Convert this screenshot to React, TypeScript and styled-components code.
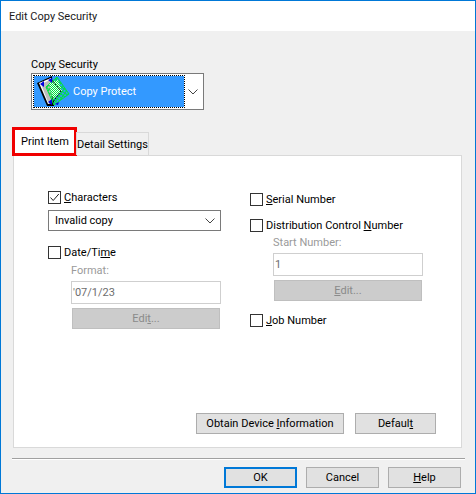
import React from "react";
import styled, { createGlobalStyle } from "styled-components";

const Global = createGlobalStyle`
  html, body { margin: 0; padding: 0; background: #f0f0f0; }
  body { font-family: Roboto, "Liberation Sans", sans-serif; font-size: 11px; color: #000; white-space: nowrap; }
`;

const Window = styled.div`
  width: 476px;
  height: 494px;
  box-sizing: border-box;
  border: 1px solid #0078d7;
  background: #f0f0f0;
  display: flex;
  flex-direction: column;
  overflow: hidden;
`;

const TitleBar = styled.div`
  height: 30px;
  flex: none;
  background: #fff;
  padding-left: 8px;
  display: flex;
  align-items: center;
  color: #1a1a1a;
`;

const Body = styled.div`
  flex: 1;
  display: flex;
  flex-direction: column;
  padding: 25px 0 0 11px;
`;

const SecurityBlock = styled.div`
  margin-left: 19px;
  height: 71px;
`;

const Label = styled.div<{ $disabled?: boolean }>`
  height: 17px;
  line-height: 17px;
  color: ${(p) => (p.$disabled ? "#9a9a9a" : "#000")};
`;

const IconCombo = styled.div`
  width: 173px;
  height: 37px;
  box-sizing: border-box;
  border: 1px solid #7a7a7a;
  background: #fff;
  padding: 2px;
  display: flex;
  align-items: center;
`;

const ComboSelection = styled.div`
  width: 150px;
  height: 31px;
  box-sizing: border-box;
  background: #3399ff;
  outline: 1px dotted #000;
  color: #fff;
  display: flex;
  align-items: center;
  gap: 3px;
  padding-left: 2px;
`;

const Chevron = styled.svg`
  display: block;
  flex: none;
`;

const ChevronSlot = styled.div`
  flex: 1;
  display: flex;
  justify-content: center;
`;

const TabStrip = styled.div`
  display: flex;
  align-items: flex-end;
  height: 28px;
  position: relative;
  z-index: 1;
`;

const ActiveTab = styled.div`
  width: 65px;
  height: 29px;
  box-sizing: border-box;
  border: 3px solid #f00000;
  background: #fff;
  display: flex;
  align-items: center;
  padding-left: 6px;
  margin-bottom: -1px;
`;

const Tab = styled.div`
  width: 73px;
  height: 23px;
  box-sizing: border-box;
  border: 1px solid #d9d9d9;
  border-bottom: none;
  background: #f0f0f0;
  display: flex;
  align-items: center;
  justify-content: center;
  margin-left: -1px;
`;

const Panel = styled.div`
  width: 449px;
  height: 293px;
  box-sizing: border-box;
  margin-left: 1px;
  border: 1px solid #d9d9d9;
  background: #fff;
  padding: 35px 24px 13px 34px;
  display: flex;
  flex-direction: column;
  justify-content: space-between;
`;

const Columns = styled.div`
  display: grid;
  grid-template-columns: 173px 172px;
  column-gap: 29px;
`;

const Column = styled.div<{ $top?: number }>`
  padding-top: ${(p) => p.$top ?? 0}px;
  display: flex;
  flex-direction: column;
`;

const CheckRow = styled.label<{ $gap?: number }>`
  display: flex;
  align-items: center;
  gap: 3px;
  height: 13px;
  margin-bottom: ${(p) => p.$gap ?? 0}px;
`;

const Box = styled.span`
  width: 13px;
  height: 13px;
  flex: none;
  box-sizing: border-box;
  border: 1px solid #333;
  background: #fff;
  display: flex;
  align-items: center;
  justify-content: center;
`;

const Dropdown = styled.div`
  height: 21px;
  box-sizing: border-box;
  border: 1px solid #7a7a7a;
  background: #fff;
  padding: 0 5px 0 6px;
  margin-bottom: 15px;
  display: flex;
  align-items: center;
  justify-content: space-between;
`;

const Indented = styled.div<{ $top: number }>`
  display: flex;
  flex-direction: column;
  margin-left: 23px;
  padding-top: ${(p) => p.$top}px;
`;

const DisabledInput = styled.div`
  width: 150px;
  height: 23px;
  box-sizing: border-box;
  border: 1px solid #cfcfcf;
  background: #fff;
  color: #6d6d6d;
  padding-left: 1px;
  margin-top: 2px;
  display: flex;
  align-items: center;
`;

const DisabledButton = styled.div<{ $gap?: number }>`
  width: 148px;
  height: 21px;
  box-sizing: border-box;
  margin: 4px 0 ${(p) => p.$gap ?? 0}px 1px;
  border: 1px solid #bfbfbf;
  background: #cccccc;
  color: #8a8a8a;
  display: flex;
  align-items: center;
  justify-content: center;
`;

const PanelActions = styled.div`
  display: flex;
  gap: 11px;
  margin-left: 148px;
`;

const Separator = styled.div`
  width: 453px;
  height: 1px;
  margin: 10px 0 8px;
  background: #a0a0a0;
  box-shadow: 0 1px 0 #fff;
`;

const Footer = styled.div`
  display: flex;
  margin-left: 212px;
  gap: 9px;
`;

const Button = styled.div<{ $width: number; $default?: boolean }>`
  width: ${(p) => p.$width}px;
  height: 21px;
  box-sizing: border-box;
  border: ${(p) => (p.$default ? "2px solid #0078d7" : "1px solid #adadad")};
  background: #e1e1e1;
  display: flex;
  align-items: center;
  justify-content: center;
`;

const ChevronIcon = () => (
  <Chevron width="10" height="6" viewBox="0 0 10 6">
    <path d="M0.5 0.5 L5 5 L9.5 0.5" fill="none" stroke="#444" strokeWidth="1" />
  </Chevron>
);

const CopyProtectIcon = () => (
  <svg width="34" height="31" viewBox="0 0 34 31" style={{ flex: "none", display: "block" }}>
    <defs>
      <pattern id="fine" width="2" height="2" patternUnits="userSpaceOnUse">
        <rect width="2" height="2" fill="#e8fff0" />
        <rect width="1" height="1" fill="#00e040" />
        <rect x="1" y="1" width="1" height="1" fill="#00e040" />
      </pattern>
      <pattern id="open" width="3" height="3" patternUnits="userSpaceOnUse" patternTransform="rotate(35)">
        <rect width="3" height="1" fill="#00e040" />
        <rect width="1" height="3" fill="#00e040" />
      </pattern>
    </defs>
    <path d="M1 7 L16 0 L18 30 L11 30 Z" fill="#000" />
    <path d="M3 7 L15 2 L16 27 L12 28 Z" fill="#fff" />
    <path d="M5 8 L14 4 L15 26 L12 26 Z" fill="#bdbdbd" />
    <path d="M21 1 L33 18 L18 29 L10 11 Z" fill="url(#open)" stroke="#00e040" strokeWidth="1" />
    <path d="M13 7 L22 4 L26 15 L17 23 Z" fill="url(#fine)" />
    <path d="M15 3 L25 15 L17 26" fill="none" stroke="#000" strokeWidth="1" strokeDasharray="2 1" />
    <path d="M4 8 L8 5 L8 11 Z M12 4 L16 2 L16 7 Z M12 26 L16 23 L16 29 Z M19 28 L23 26 L22 29 Z" fill="#0000e0" />
  </svg>
);

export default function App() {
  return (
    <Window>
      <Global />
      <TitleBar>Edit Copy Security</TitleBar>
      <Body>
        <SecurityBlock>
          <Label>
            Cop<u>y</u> Security
          </Label>
          <IconCombo>
            <ComboSelection>
              <CopyProtectIcon />
              Copy Protect
            </ComboSelection>
            <ChevronSlot>
              <ChevronIcon />
            </ChevronSlot>
          </IconCombo>
        </SecurityBlock>

        <TabStrip>
          <ActiveTab>Print Item</ActiveTab>
          <Tab>Detail Settings</Tab>
        </TabStrip>

        <Panel>
          <Columns>
            <Column>
              <CheckRow $gap={6}>
                <Box>
                  <svg width="11" height="11" viewBox="0 0 11 11">
                    <path d="M1.5 5.5 L4.2 8.5 L9.8 2" fill="none" stroke="#222" strokeWidth="1" />
                  </svg>
                </Box>
                <span>
                  <u>C</u>haracters
                </span>
              </CheckRow>
              <Dropdown>
                Invalid copy
                <ChevronIcon />
              </Dropdown>
              <CheckRow>
                <Box />
                <span>
                  Date/Ti<u>m</u>e
                </span>
              </CheckRow>
              <Indented $top={3}>
                <Label $disabled>Format:</Label>
                <DisabledInput>'07/1/23</DisabledInput>
                <DisabledButton>
                  <span>
                    Edi<u>t</u>...
                  </span>
                </DisabledButton>
              </Indented>
            </Column>
            <Column $top={2}>
              <CheckRow $gap={13}>
                <Box />
                <span>
                  <u>S</u>erial Number
                </span>
              </CheckRow>
              <CheckRow>
                <Box />
                <span>
                  Distribution Control <u>N</u>umber
                </span>
              </CheckRow>
              <Indented $top={2}>
                <Label $disabled>Start Number:</Label>
                <DisabledInput>1</DisabledInput>
                <DisabledButton $gap={13}>
                  <span>
                    <u>E</u>dit...
                  </span>
                </DisabledButton>
              </Indented>
              <CheckRow>
                <Box />
                <span>
                  <u>J</u>ob Number
                </span>
              </CheckRow>
            </Column>
          </Columns>
          <PanelActions>
            <Button $width={148}>
              <span>
                Obtain Device <u>I</u>nformation
              </span>
            </Button>
            <Button $width={81}>
              <span>
                Defaul<u>t</u>
              </span>
            </Button>
          </PanelActions>
        </Panel>

        <Separator />

        <Footer>
          <Button $width={73} $default>OK</Button>
          <Button $width={73}>Cancel</Button>
          <Button $width={73}>
            <span>
              <u>H</u>elp
            </span>
          </Button>
        </Footer>
      </Body>
    </Window>
  );
}
